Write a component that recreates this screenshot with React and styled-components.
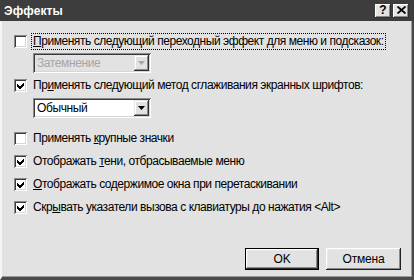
import React from "react";
import styled, { createGlobalStyle } from "styled-components";

const GlobalStyle = createGlobalStyle`
  html, body { margin: 0; padding: 0; background: #e2e2e2; }
  body { font-family: "Liberation Sans", Arial, sans-serif; }
  * { box-sizing: border-box; }
`;

const Window = styled.div`
  width: 414px;
  height: 280px;
  display: flex;
  flex-direction: column;
  background: #e2e2e2;
  overflow: hidden;
`;

const TitleBar = styled.div`
  height: 21px;
  flex: none;
  display: flex;
  align-items: center;
  gap: 2px;
  padding: 0 5px 0 4px;
  background: #3d3d3d;
`;

const Title = styled.div`
  flex: 1;
  color: #fff;
  font: bold 12px "Liberation Sans", Arial, sans-serif;
  letter-spacing: 0.1px;
`;

const CaptionButton = styled.div`
  width: 16px;
  height: 14px;
  display: flex;
  align-items: center;
  justify-content: center;
  background: #e2e2e2;
  box-shadow: inset -1px -1px #303030, inset 1px 1px #ffffff,
    inset -2px -2px #8a8a8a, inset 2px 2px #e8e8e8;
  font: bold 12px "Liberation Sans", Arial, sans-serif;
  color: #000;
  line-height: 1;
  padding-bottom: 1px;
`;

const Body = styled.div`
  flex: 1;
  display: flex;
  flex-direction: column;
  padding: 11px 11px 7px 12px;
  border-left: 2px solid #f6f6f6;
  border-right: 2px solid #4a4a4a;
  border-bottom: 3px solid #4a4a4a;
  box-shadow: inset -1px 0 #9a9a9a, inset 0 -1px #9a9a9a;
`;

const CheckRow = styled.div`
  display: flex;
  align-items: center;
  gap: 4px;
  height: ${(p) => p.$h || 23}px;
  margin-top: ${(p) => p.$mt || 0}px;
  flex: none;
`;

const Box = styled.div`
  width: 13px;
  height: 13px;
  flex: none;
  background: #fff;
  box-shadow: inset 1px 1px #8a8a8a, inset -1px -1px #ffffff,
    inset 2px 2px #3a3a3a, inset -2px -2px #d6d6d6;
  display: flex;
`;

const Label = styled.span`
  font-size: 12px;
  line-height: 15px;
  color: #000;
  letter-spacing: -0.45px;
  padding: 0 1px;
  border: 1px ${(p) => (p.$focus ? "dotted #000" : "solid transparent")};
  white-space: nowrap;
`;

const U = styled.span`
  text-decoration: underline;
  text-underline-offset: 1px;
`;

const Combo = styled.div`
  width: 118px;
  height: 20px;
  margin-left: 19px;
  margin-top: ${(p) => p.$mt || 0}px;
  flex: none;
  display: flex;
  padding: 2px;
  background: ${(p) => (p.$disabled ? "#e2e2e2" : "#fff")};
  box-shadow: inset 1px 1px #8a8a8a, inset -1px -1px #ffffff,
    inset 2px 2px #3a3a3a, inset -2px -2px #d6d6d6;
`;

const ComboText = styled.div`
  flex: 1;
  font-size: 12px;
  line-height: 16px;
  letter-spacing: -0.4px;
  padding-left: 2px;
  color: ${(p) => (p.$disabled ? "#a6a6a6" : "#000")};
`;

const DropButton = styled.div`
  width: 15px;
  flex: none;
  display: flex;
  align-items: center;
  justify-content: center;
  background: #e2e2e2;
  box-shadow: inset -1px -1px #303030, inset 1px 1px #e8e8e8,
    inset -2px -2px #8a8a8a, inset 2px 2px #ffffff;
`;

const ButtonRow = styled.div`
  margin-top: auto;
  display: flex;
  justify-content: flex-end;
  gap: 7px;
`;

const Button = styled.div`
  width: ${(p) => p.$w || 74}px;
  height: 22px;
  display: flex;
  align-items: center;
  justify-content: center;
  font-size: 12px;
  letter-spacing: -0.2px;
  color: #000;
  background: #e2e2e2;
  border: 1px solid ${(p) => (p.$default ? "#000" : "transparent")};
  box-shadow: inset -1px -1px #303030, inset 1px 1px #ffffff,
    inset -2px -2px #8a8a8a, inset 2px 2px #e8e8e8;
  ${(p) =>
    !p.$default &&
    `border: none; box-shadow: inset -1px -1px #202020, inset 1px 1px #ffffff, inset -2px -2px #8a8a8a, inset 2px 2px #e8e8e8;`}
`;

const Check = () => (
  <svg width="13" height="13" viewBox="0 0 13 13" shapeRendering="crispEdges">
    <path d="M3 5 L5.5 7.5 L10 3 L10 6 L5.5 10.5 L3 8 Z" fill="#000" />
  </svg>
);

const Arrow = ({ color }) => (
  <svg width="7" height="4" viewBox="0 0 7 4">
    <path d="M0 0 H7 L3.5 4 Z" fill={color} />
  </svg>
);

const CloseGlyph = () => (
  <svg width="9" height="8" viewBox="0 0 9 8">
    <path d="M0.5 0.5 L8.5 7.5 M8.5 0.5 L0.5 7.5" stroke="#000" strokeWidth="1.8" />
  </svg>
);

const Option = ({ checked, focus, h, mt, children }) => (
  <CheckRow $h={h} $mt={mt}>
    <Box>{checked && <Check />}</Box>
    <Label $focus={focus}>{children}</Label>
  </CheckRow>
);

export default function App() {
  return (
    <>
      <GlobalStyle />
      <Window>
        <TitleBar>
          <Title>Эффекты</Title>
          <CaptionButton>?</CaptionButton>
          <CaptionButton>
            <CloseGlyph />
          </CaptionButton>
        </TitleBar>
        <Body>
          <Option focus h={18}>
            <U>П</U>рименять следующий переходный эффект для меню и подсказок:
          </Option>
          <Combo $disabled $mt={3}>
            <ComboText $disabled>Затемнение</ComboText>
            <DropButton>
              <Arrow color="#a6a6a6" />
            </DropButton>
          </Combo>
          <Option checked h={18} mt={3}>
            Пр<U>и</U>менять следующий метод сглаживания экранных шрифтов:
          </Option>
          <Combo $mt={4}>
            <ComboText>Обычный</ComboText>
            <DropButton>
              <Arrow color="#000" />
            </DropButton>
          </Combo>
          <Option mt={9}>
            Применять <U>к</U>рупные значки
          </Option>
          <Option checked>
            Отображать <U>т</U>ени, отбрасываемые меню
          </Option>
          <Option checked>
            <U>О</U>тображать содержимое окна при перетаскивании
          </Option>
          <Option checked>
            Скр<U>ы</U>вать указатели вызова с клавиатуры до нажатия &lt;Alt&gt;
          </Option>
          <ButtonRow>
            <Button $default>OK</Button>
            <Button $w={75}>Отмена</Button>
          </ButtonRow>
        </Body>
      </Window>
    </>
  );
}
